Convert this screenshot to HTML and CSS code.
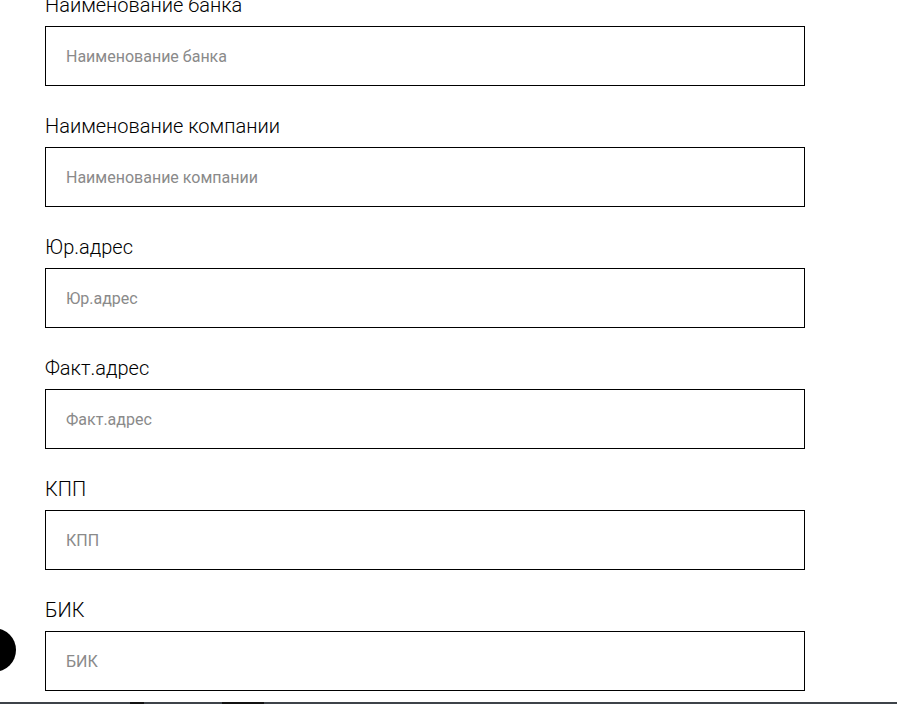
FILE: index.html
```html
<!DOCTYPE html>
<html lang="ru">
<head>
<meta charset="utf-8">
<title>Реквизиты</title>
<link rel="stylesheet" href="styles.css">
</head>
<body>
<form class="form">
  <div class="field">
    <label class="label">Наименование банка</label>
    <input class="input" type="text" placeholder="Наименование банка">
  </div>
  <div class="field">
    <label class="label">Наименование компании</label>
    <input class="input" type="text" placeholder="Наименование компании">
  </div>
  <div class="field">
    <label class="label">Юр.адрес</label>
    <input class="input" type="text" placeholder="Юр.адрес">
  </div>
  <div class="field">
    <label class="label">Факт.адрес</label>
    <input class="input" type="text" placeholder="Факт.адрес">
  </div>
  <div class="field">
    <label class="label">КПП</label>
    <input class="input" type="text" placeholder="КПП">
  </div>
  <div class="field">
    <label class="label">БИК</label>
    <input class="input" type="text" placeholder="БИК">
  </div>
</form>
<div class="side-button"></div>
<div class="bottom-bar"><span class="seg seg-a"></span><span class="seg seg-b"></span></div>
</body>
</html>
```

FILE: styles.css
```css
html, body {
  margin: 0;
  padding: 0;
  background: #fff;
  overflow: hidden;
  height: 704px;
}

body {
  font-family: Roboto, "Liberation Sans", sans-serif;
  color: #000;
}

.form {
  margin: -7px 0 0 45px;
  display: flex;
  flex-direction: column;
  gap: 28px;
}

.field {
  display: flex;
  flex-direction: column;
  gap: 9px;
}

.label {
  font-size: 20px;
  font-weight: 300;
  line-height: 24px;
  color: #000;
}

.input {
  box-sizing: border-box;
  width: 760px;
  height: 60px;
  border: 1px solid #000;
  border-radius: 0;
  padding: 0 20px;
  margin: 0;
  font-family: Roboto, "Liberation Sans", sans-serif;
  font-size: 16px;
  color: #000;
  background: #fff;
  outline: none;
}

.input::placeholder {
  color: #8a8a8a;
  opacity: 1;
}

.side-button {
  position: fixed;
  left: -28px;
  top: 628px;
  width: 44px;
  height: 44px;
  border-radius: 50%;
  background: #000;
}

.bottom-bar {
  position: fixed;
  left: 0;
  right: 0;
  bottom: 0;
  height: 2px;
  background: #3d4349;
}

.seg {
  position: absolute;
  top: 0;
  height: 2px;
  background: #111;
}

.seg-a { left: 130px; width: 14px; }
.seg-b { left: 222px; width: 42px; }
```
